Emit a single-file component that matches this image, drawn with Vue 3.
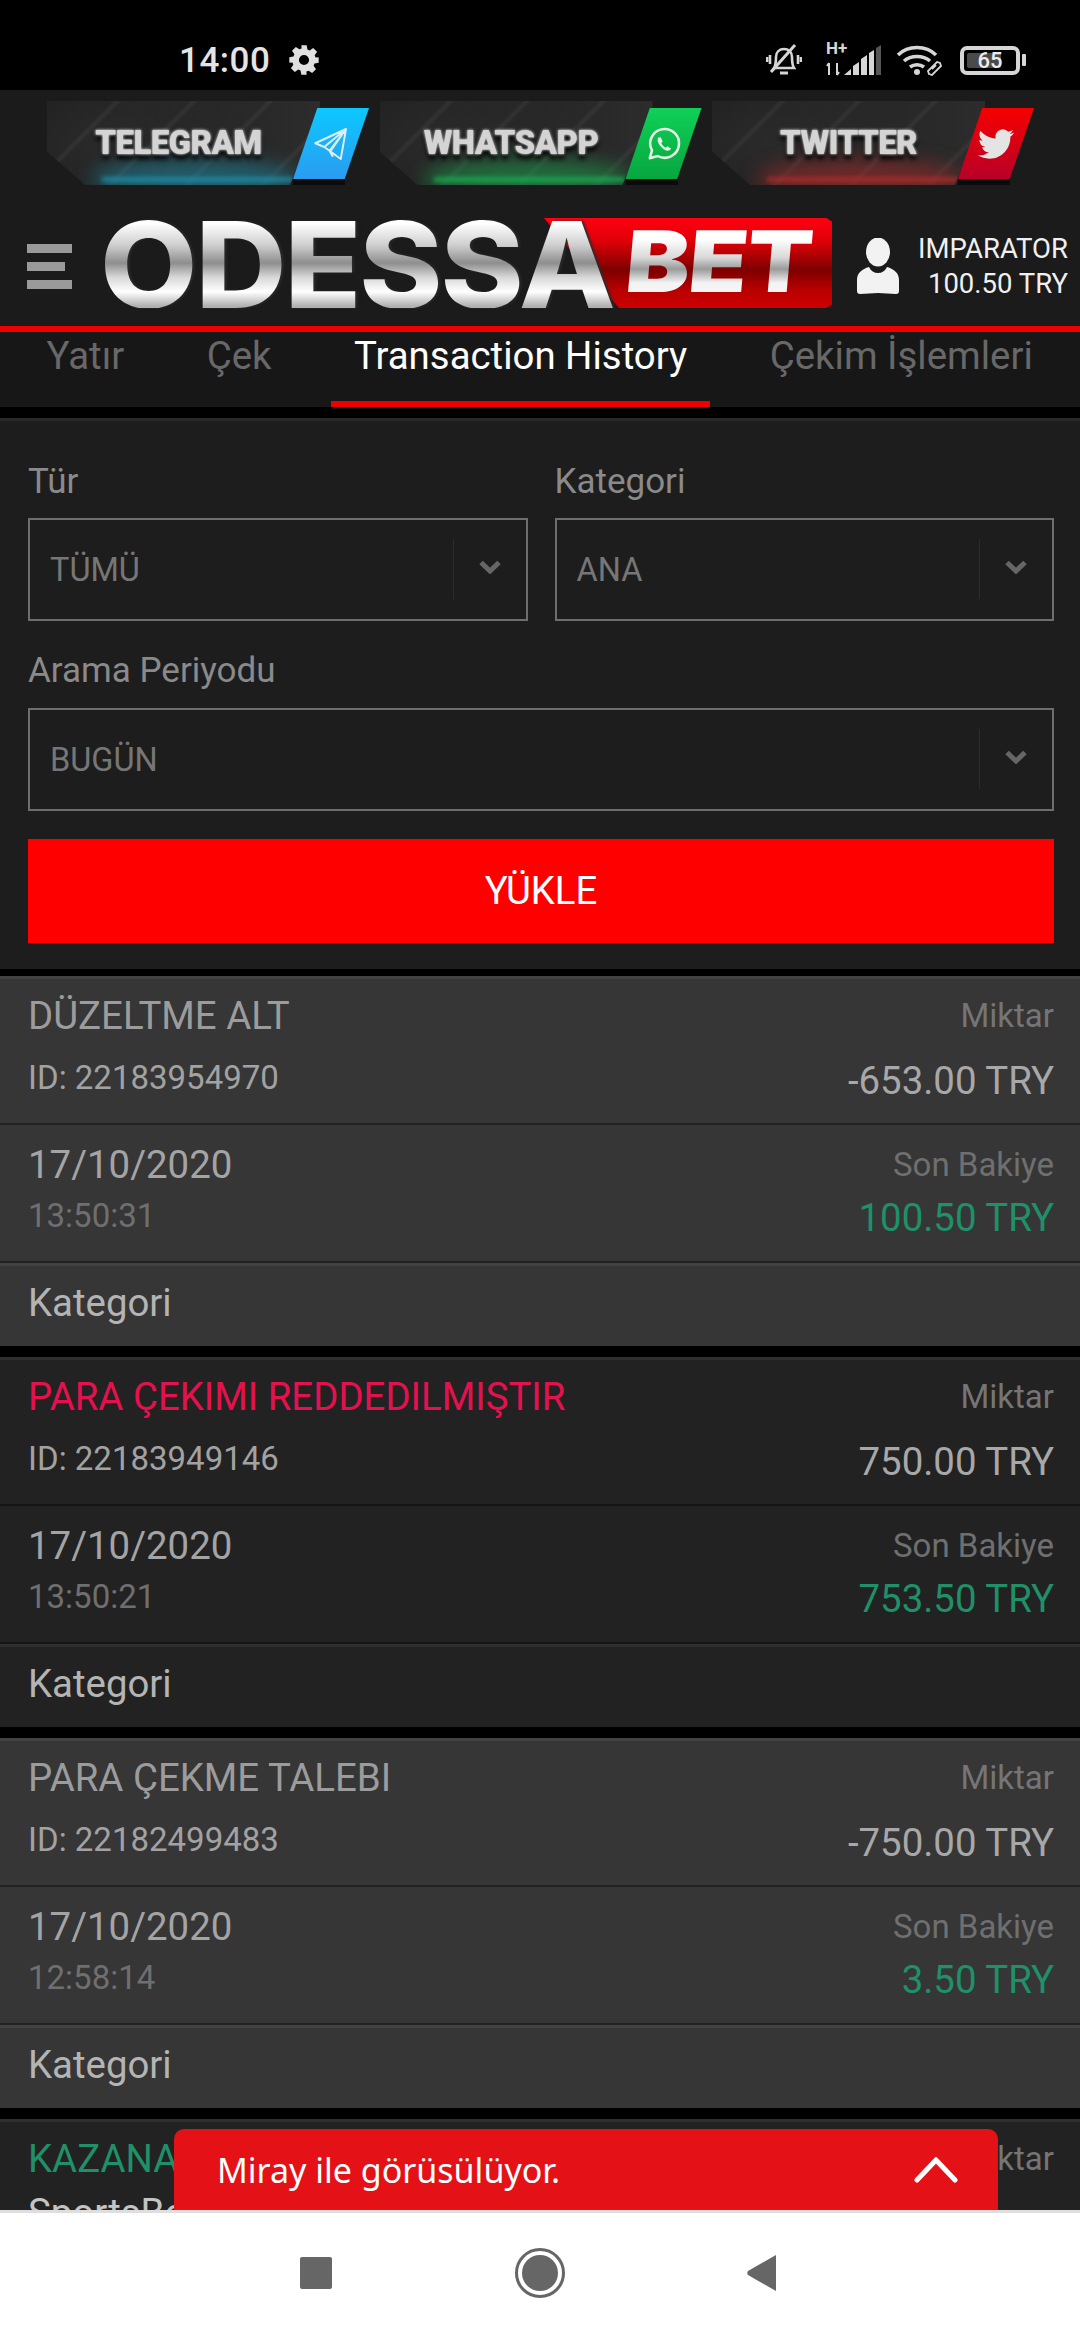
<template>
  <div class="phone">
    <div class="statusbar">
      <span class="clock">14:00</span>
      <svg class="gear" viewBox="0 0 24 24"><path fill-rule="evenodd" d="M10 1h4l.6 3.1 1.7.7 2.6-1.8 2.9 2.9-1.8 2.6.7 1.7L23 10v4l-3.1.6-.7 1.7 1.8 2.6-2.9 2.9-2.6-1.8-1.7.7L14 23h-4l-.6-3.1-1.7-.7-2.6 1.8L2.2 18.100l1.800-2.600-.7-1.700L1 14v-4l3.100-.6.7-1.700L3 5.100 5.900 2.200l2.600 1.800 1.700-.7zM12 8.200a3.800 3.800 0 1 0 0 7.600 3.800 3.800 0 0 0 0-7.600z"/></svg>
      <div class="status-icons">
        <svg class="ic-bell" viewBox="0 0 36 34" fill="none" stroke="#d6d6d6" stroke-width="2.600">
          <path d="M8 25c2-3 2-6 2-11 0-5 3.500-8 8-8s8 3 8 8c0 5 0 8 2 11z"/>
          <path d="M14 30h8" stroke-width="3"/>
          <path d="M4 12v9M1 14v5M32 12v9M35 14v5"/>
          <path d="M5 29 29 2" stroke-width="3"/>
        </svg>
        <div class="signal">
          <span class="hplus">H+</span>
          <svg viewBox="0 0 56 32">
            <path d="M3 31V19M1 22l2-3M11 19v12M13 28l-2 3" stroke="#d6d6d6" stroke-width="2" fill="none"/>
            <path d="M18 31l7-6v6zM27 31V22l6-4v13zM35 31V15l6-4v20zM43 31V9l5-3v25z" fill="#d6d6d6"/>
            <path d="M50 31V4l5-3v30z" fill="#555"/>
          </svg>
        </div>
        <svg class="ic-wifi" viewBox="0 0 48 32" fill="none" stroke="#d6d6d6" stroke-width="3.600">
          <path d="M2 11C12 1 30 1 40 11M8 17c7-6 19-6 26 0M14 23c4-3 10-3 14 0"/>
          <circle cx="21" cy="28" r="3" fill="#d6d6d6" stroke="none"/>
          <path d="M33 30l3 1 9-9-1-3-3-1-9 9zM36 25l4-4" stroke-width="1.800"/>
        </svg>
        <div class="battery">
          <div class="battery-body"><span class="battery-fill"></span><span class="battery-num">65</span></div>
          <span class="battery-nub"></span>
        </div>
      </div>
    </div>

    <div class="content">
      <header class="header">
        <div class="banners">
          <div v-for="b in banners" :key="b.name" class="banner" :class="b.cls">
            <div class="banner-body">
              <span class="banner-text">{{ b.name }}</span>
              <span class="banner-glow"></span>
              <span class="banner-line"></span>
            </div>
            <div class="banner-shadow"></div>
            <div class="banner-icon">
              <svg v-if="b.cls === 'tg'" viewBox="0 0 24 24" fill="none" stroke="#d9eef8" stroke-width="1.300" stroke-linejoin="round">
                <path d="M22 2 1.500 11.500l6 2.500L22 2zM22 2l-3.500 20-7.500-5.500L7.500 14M22 2 11 16.500 13 20l-1.500-3z"/>
              </svg>
              <svg v-else-if="b.cls === 'wa'" viewBox="0 0 24 24" fill="none" stroke="#e3f2e3" stroke-width="1.700">
                <path d="M2.500 21.500 4 16.200A9.600 9.600 0 1 1 7.800 20z" stroke-linejoin="round"/>
                <path d="M8.500 7.500c-1 1-1 2.500 0 4.300 1.200 2 3 3.800 5 4.500 1.400.4 2.600 0 3.200-1.300l-2.400-1.500-1.100 1c-1.300-.5-2.500-1.900-3-3.100l.9-1.100-1.200-2.600z" fill="#e3f2e3" stroke="none"/>
              </svg>
              <svg v-else viewBox="0 0 24 24" fill="#e4e4e4">
                <path d="M23.953 4.570a10 10 0 01-2.825.775 4.958 4.958 0 002.163-2.723c-.951.555-2.005.959-3.127 1.184a4.920 4.920 0 00-8.384 4.482C7.690 8.095 4.067 6.130 1.640 3.162a4.822 4.822 0 00-.666 2.475c0 1.710.870 3.213 2.188 4.096a4.904 4.904 0 01-2.228-.616v.060a4.923 4.923 0 003.946 4.827 4.996 4.996 0 01-2.212.085 4.936 4.936 0 004.604 3.417 9.867 9.867 0 01-6.102 2.105c-.390 0-.779-.023-1.170-.067a13.995 13.995 0 007.557 2.209c9.053 0 13.998-7.496 13.998-13.985 0-.210 0-.420-.015-.630A9.935 9.935 0 0024 4.590z"/>
              </svg>
            </div>
          </div>
        </div>

        <div class="topbar">
          <div class="burger"><i></i><i class="short"></i><i></i></div>
          <div class="logo">
            <span class="logo-main">ODESSA</span>
            <div class="logo-box"><span class="logo-bet">BET</span></div>
          </div>
          <svg class="user-ic" viewBox="0 0 44 56" fill="#f2f2f2">
            <ellipse cx="22" cy="14" rx="12" ry="14.500"/>
            <path d="M13 29c2 4 5 6 9 6s7-2 9-6c7 2 12 6 12 13v11c0 2-1 3-3 3l-18-1-18 1c-2 0-3-1-3-3V42c0-7 5-11 12-13z"/>
          </svg>
          <div class="user-text">
            <span>IMPARATOR</span>
            <span>100.50 TRY</span>
          </div>
        </div>
      </header>

      <nav class="tabs">
        <a v-for="t in tabs" :key="t" class="tab" :class="{ active: t === 'Transaction History' }">{{ t }}</a>
      </nav>

      <section class="filters">
        <div class="filter-row">
          <div class="field">
            <label>Tür</label>
            <div class="select"><span>TÜMÜ</span><em class="chev"><svg viewBox="0 0 24 14"><path d="M3 2.500 12 11l9-8.500"/></svg></em></div>
          </div>
          <div class="field">
            <label>Kategori</label>
            <div class="select"><span>ANA</span><em class="chev"><svg viewBox="0 0 24 14"><path d="M3 2.500 12 11l9-8.500"/></svg></em></div>
          </div>
        </div>
        <div class="field field-wide">
          <label>Arama Periyodu</label>
          <div class="select"><span>BUGÜN</span><em class="chev"><svg viewBox="0 0 24 14"><path d="M3 2.500 12 11l9-8.500"/></svg></em></div>
        </div>
        <button class="load">YÜKLE</button>
      </section>

      <div v-for="(c, i) in records" :key="c.id" class="record" :class="i % 2 ? 'even' : 'odd'">
        <div class="rec-row rec-top">
          <div class="col">
            <div class="rec-title" :class="c.tone">{{ c.title }}</div>
            <div class="rec-id" :class="{ sport: c.tone === 'good' }">{{ c.id }}</div>
          </div>
          <div class="col right">
            <div class="rec-label">Miktar</div>
            <div v-if="c.amount" class="rec-amount">{{ c.amount }}</div>
          </div>
        </div>
        <div class="rec-row rec-mid">
          <div class="col">
            <div class="rec-date">17/10/2020</div>
            <div class="rec-time">{{ c.time }}</div>
          </div>
          <div class="col right">
            <div class="rec-label2">Son Bakiye</div>
            <div class="rec-balance">{{ c.balance }}</div>
          </div>
        </div>
        <div class="rec-cat">Kategori</div>
      </div>

      <div class="chat">
        <span>Miray ile görüsülüyor.</span>
        <svg viewBox="0 0 44 26" fill="none" stroke="#fff" stroke-width="5" stroke-linecap="round"><path d="M3 23 22 3l19 20"/></svg>
      </div>
    </div>

    <div class="navbar">
      <span class="nav-square"></span>
      <span class="nav-home"><i></i></span>
      <svg class="nav-back" viewBox="0 0 32 38"><path d="M31 1v36L3 21c-1-1-1-3 0-4z" fill="#666"/></svg>
    </div>
  </div>
</template>

<script setup>
const banners = [
  { name: 'TELEGRAM', cls: 'tg' },
  { name: 'WHATSAPP', cls: 'wa' },
  { name: 'TWITTER', cls: 'tw' }
]

const tabs = ['Yatır', 'Çek', 'Transaction History', 'Çekim İşlemleri']

const records = [
  { title: 'DÜZELTME ALT', tone: '', id: 'ID: 22183954970', amount: '-653.00 TRY', time: '13:50:31', balance: '100.50 TRY' },
  { title: 'PARA ÇEKIMI REDDEDILMIŞTIR', tone: 'bad', id: 'ID: 22183949146', amount: '750.00 TRY', time: '13:50:21', balance: '753.50 TRY' },
  { title: 'PARA ÇEKME TALEBI', tone: '', id: 'ID: 22182499483', amount: '-750.00 TRY', time: '12:58:14', balance: '3.50 TRY' },
  { title: 'KAZANAN', tone: 'good', id: 'SportsBook', amount: '', time: '12:40:02', balance: '753.50 TRY' }
]
</script>

<style>
html, body { margin: 0; background: #000; }
</style>

<style scoped>
.phone {
  width: 1080px;
  height: 2340px;
  display: flex;
  flex-direction: column;
  overflow: hidden;
  background: #000;
  font-family: Roboto, "Liberation Sans", sans-serif;
}

/* status bar */
.statusbar { height: 90px; flex: none; display: flex; align-items: center; padding: 30px 54px 0 179px; box-sizing: border-box; color: #e4e4e4; }
.clock { font-size: 35px; font-weight: 500; letter-spacing: .5px; width: 109px; }
.gear { width: 32px; height: 32px; fill: #e0e0e0; }
.status-icons { margin-left: auto; display: flex; align-items: center; }
.ic-bell { width: 36px; height: 34px; }
.signal { position: relative; width: 56px; height: 32px; margin-left: 24px; }
.signal svg { width: 56px; height: 32px; display: block; }
.hplus { position: absolute; left: 0; top: -6px; font-size: 17px; line-height: 20px; font-weight: 700; color: #d6d6d6; }
.ic-wifi { width: 48px; height: 32px; margin-left: 14px; }
.battery { display: flex; align-items: center; margin-left: 16px; }
.battery-body { position: relative; width: 60px; height: 29px; border: 4px solid #d6d6d6; border-radius: 7px; box-sizing: border-box; display: flex; align-items: center; justify-content: center; }
.battery-fill { position: absolute; left: 3px; top: 3px; bottom: 3px; width: 34px; background: #4a4a4a; border-radius: 2px; }
.battery-num { position: relative; font-size: 22px; font-weight: 500; color: #ececec; }
.battery-nub { width: 4px; height: 12px; background: #d6d6d6; margin-left: 2px; border-radius: 1px; }

/* header */
.content { position: relative; flex: 1; overflow: hidden; min-height: 0; background: #000; }
.header { height: 242px; background: #1b1b1b; box-sizing: border-box; padding-top: 11px; border-bottom: 6px solid #ee0000; }
.banners { display: flex; padding-left: 47px; gap: 10.500px; height: 84px; }
.banner { position: relative; width: 322px; height: 84px; flex: none; }
.banner-body {
  position: relative;
  width: 273px;
  height: 84px;
  overflow: hidden;
  clip-path: polygon(0 0, 100% 0, 100% 12%, 89% 100%, 14% 100%, 0 60%);
  background:
    repeating-linear-gradient(135deg, transparent 0 46px, rgba(255,255,255,.05) 50px, transparent 54px),
    radial-gradient(ellipse 70% 120% at 22% 50%, #2a2a2a, transparent),
    linear-gradient(90deg, #1b1b1b, #222 30%, #2c2c2c 100%);
  display: flex;
  justify-content: center;
}
.tg .banner-body, .wa .banner-body { padding-right: 10px; box-sizing: border-box; }
.banner-text {
  position: relative;
  z-index: 1;
  margin-top: 23px;
  height: 38px;
  font-size: 33px;
  line-height: 38px;
  font-weight: 900;
  letter-spacing: -.6px;
  color: #d4d4d4;
  text-shadow: 0 0 3px #fff, 0 5px 5px #000;
  filter: blur(.7px);
}
.banner-glow { position: absolute; left: 16%; right: 8%; bottom: -14px; height: 40px; border-radius: 50%; filter: blur(10px); opacity: .5; }
.banner-line { position: absolute; left: 20%; right: 10%; bottom: 3px; height: 5px; filter: blur(2px); opacity: .75; }
.tg .banner-glow, .tg .banner-line { background: #1c93ad; }
.wa .banner-glow, .wa .banner-line { background: #1ab254; }
.tw .banner-glow, .tw .banner-line { background: #b32c2c; }
.banner-icon { position: absolute; left: 246px; top: 7px; width: 76px; height: 71px; clip-path: polygon(32% 0, 100% 0, 68% 100%, 0 100%); display: flex; align-items: center; justify-content: center; }
.banner-shadow { position: absolute; left: 246px; top: 76px; width: 52px; height: 8px; background: #0b0b0b; }
.banner-icon svg { width: 36px; height: 36px; }
.tg .banner-icon { background: linear-gradient(180deg, #0cc8ff, #2a9cf0); }
.wa .banner-icon { background: linear-gradient(180deg, #10d058, #07a63f); }
.tw .banner-icon { background: linear-gradient(180deg, #f60000, #b80028); }

.topbar { display: flex; align-items: flex-start; margin-top: 33px; height: 90px; position: relative; }
.burger { width: 45px; margin: 26px 0 0 27px; display: flex; flex-direction: column; gap: 9px; flex: none; }
.burger i { display: block; height: 9px; width: 45px; background: #9a9a9a; }
.burger i.short { width: 38px; }
.logo { display: flex; margin-left: 33px; height: 90px; width: 727px; flex: none; }
.logo-main {
  position: relative;
  z-index: 1;
  display: block;
  width: 510px;
  flex: none;
  font-family: Inter, "Liberation Sans", sans-serif;
  font-weight: 800;
  font-size: 119px;
  line-height: 94px;
  height: 90px;
  letter-spacing: -2px;
  color: transparent;
  transform: translateX(-5px) scaleX(1.06);
  transform-origin: left center;
  background: linear-gradient(180deg, #fff 6%, #cfcfcf 30%, #8e8e8e 50%, #d8d8d8 66%, #fff 82%, #b0b0b0 98%);
  -webkit-background-clip: text;
  background-clip: text;
  filter: drop-shadow(2px 0 1px #2a2a2a);
}
.logo-box {
  width: 288px;
  height: 90px;
  margin-left: -71px;
  flex: none;
  box-sizing: border-box;
  padding-left: 82px;
  clip-path: polygon(0 0, 98% 0, 100% 4%, 100% 96%, 98% 100%, 26% 100%);
  background: linear-gradient(180deg, #ff0010 0, #e00008 25%, #7d0000 58%, #b90000 80%, #cc0000 100%);
}
.logo-bet {
  display: block;
  width: 190px;
  font-family: Inter, "Liberation Sans", sans-serif;
  font-weight: 900;
  font-size: 85px;
  line-height: 88px;
  letter-spacing: -1px;
  color: transparent;
  transform: skewX(-5deg) scaleX(1.13);
  transform-origin: left center;
  background: linear-gradient(180deg, #fff 24%, #d8d8d8 45%, #9a9a9a 58%, #f4f4f4 74%);
  -webkit-background-clip: text;
  background-clip: text;
}
.user-ic { width: 44px; height: 56px; margin: 20px 0 0 24px; flex: none; }
.user-text { position: absolute; right: 12px; top: 13px; display: flex; flex-direction: column; align-items: flex-end; font-size: 27.500px; line-height: 35px; color: #f0f0f0; }

/* tabs */
.tabs { height: 75px; background: #171717; display: flex; padding-left: 24px; gap: 37.500px; box-sizing: border-box; margin-bottom: 11px; }
.tab { padding: 0 22.500px; font-size: 38.400px; line-height: 48px; color: #686868; height: 75px; box-sizing: border-box; white-space: nowrap; }
.tab.active { color: #fff; border-bottom: 6px solid #ee0000; }

/* filters */
.filters { background: #1d1d1d; border-top: 3px solid #2a2a2a; height: 551px; box-sizing: border-box; padding: 0 26px 0 28px; margin-bottom: 7px; }
.filter-row { display: flex; gap: 27px; }
.filter-row .field { flex: none; width: 499.500px; }
.field label { display: block; font-size: 35px; line-height: 44px; color: #8a8a8a; }
.filter-row .field label { margin-top: 39px; }
.field-wide label { margin-top: 28px; }
.select { position: relative; height: 103px; margin-top: 15px; border: 2px solid #6e6e6e; box-sizing: border-box; display: flex; align-items: center; padding-left: 20px; font-size: 32.500px; color: #767676; }
.filter-row .select { margin-top: 14px; }
.chev { position: absolute; right: 0; top: 19px; bottom: 20px; width: 72px; border-left: 1px solid #2c2c2c; display: flex; align-items: center; justify-content: center; }
.chev svg { width: 24px; height: 14px; fill: none; stroke: #666; stroke-width: 5; margin-top: -4px; }
.load { display: block; width: 100%; height: 104px; margin-top: 28px; padding: 0 0 2px; border: 0; background: #f00; color: #fff; font-family: inherit; font-size: 38.400px; }

/* records */
.record { margin-bottom: 11px; font-size: 38.400px; }
.rec-row { display: flex; justify-content: space-between; padding: 0 26px 0 28px; box-sizing: border-box; }
.col { display: flex; flex-direction: column; }
.col.right { align-items: flex-end; }
.rec-top { height: 149px; border-top: 3px solid; padding-top: 13px; border-bottom: 2px solid #222; }
.rec-mid { height: 136px; padding-top: 16px; }
.rec-cat { height: 85px; box-sizing: border-box; border-top: 2px solid #1c1c1c; padding: 16px 28px 0; line-height: 48px; color: #b4b4b4; }
.odd { background: #363636; }
.odd .rec-top { border-top-color: #424242; }
.odd .rec-cat { box-shadow: inset 0 3px 0 #424242; border-top-color: #222; }
.even { background: #222; }
.even .rec-top { border-top-color: #2f2f2f; border-bottom-color: #151515; }
.even .rec-cat { box-shadow: inset 0 3px 0 #2f2f2f; border-top-color: #151515; }
.rec-title { line-height: 48px; color: #9c9c9c; white-space: nowrap; }
.rec-title.bad { color: #e5114f; }
.rec-title.good { color: #1f9068; }
.rec-id { font-size: 33px; line-height: 44px; margin-top: 16px; color: #a2a2a2; }
.rec-id.sport { font-size: 38.400px; margin-top: 8px; color: #c4c4c4; }
.rec-label { font-size: 33px; line-height: 48px; color: #757575; }
.rec-amount { line-height: 48px; margin-top: 17px; color: #a8a8a8; }
.rec-date { line-height: 48px; color: #a4a4a4; }
.rec-time { font-size: 33px; line-height: 44px; margin-top: 5px; color: #6f6f6f; }
.rec-label2 { font-size: 33px; line-height: 48px; color: #6f6f6f; }
.rec-balance { line-height: 48px; margin-top: 5px; color: #1f9068; }

/* chat toast */
.chat { position: absolute; left: 174px; bottom: 0; width: 824px; height: 81px; background: #e41216; border-radius: 10px 10px 0 0; display: flex; align-items: center; justify-content: space-between; padding: 0 40px 0 43px; box-sizing: border-box; color: #fff; font-family: "Noto Sans", sans-serif; font-size: 34px; }
.chat svg { width: 44px; height: 26px; }

/* nav */
.navbar { height: 130px; flex: none; background: #fff; border-top: 3px solid #dedede; box-sizing: border-box; display: flex; align-items: center; position: relative; padding-left: 300px; }
.nav-square { width: 32px; height: 32px; background: #666; border-radius: 2px; margin-top: -8px; }
.nav-home { width: 50px; height: 50px; margin-left: 183px; margin-top: -8px; border: 3px solid #666; border-radius: 50%; box-sizing: border-box; display: flex; align-items: center; justify-content: center; }
.nav-home i { display: block; width: 36px; height: 36px; border-radius: 50%; background: #666; }
.nav-back { width: 32px; height: 38px; margin-left: 180px; margin-top: -8px; }
</style>
